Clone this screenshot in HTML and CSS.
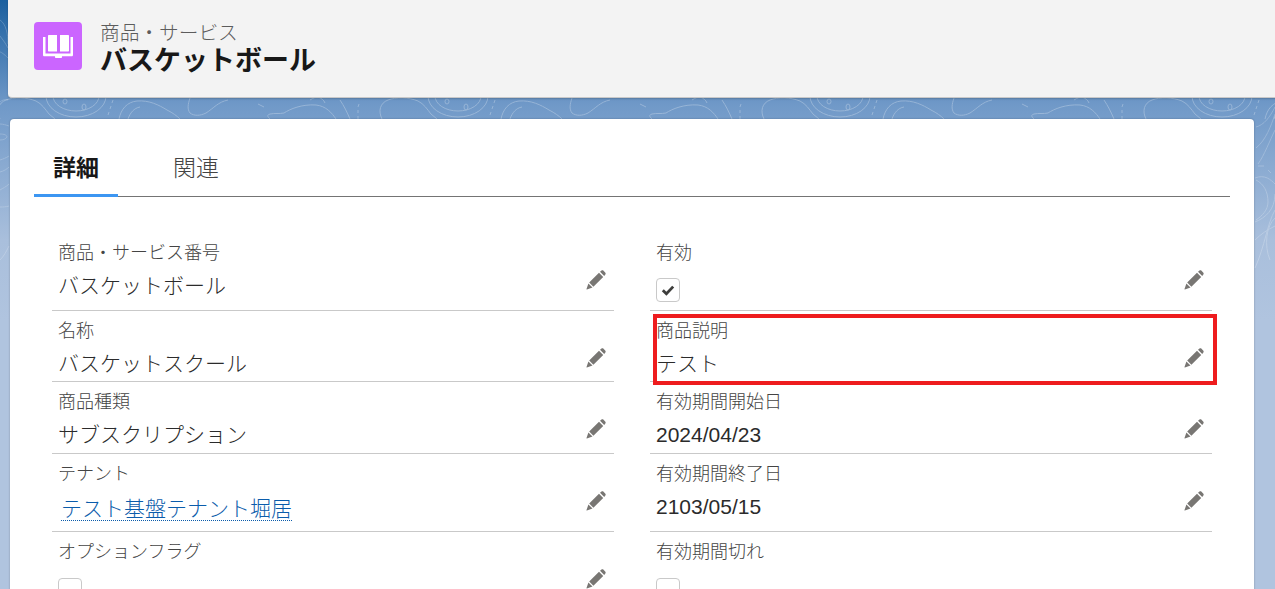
FILE: index.html
```html
<!DOCTYPE html>
<html lang="ja">
<head>
<meta charset="utf-8">
<title>バスケットボール</title>
<link rel="stylesheet" href="styles.css">
</head>
<body>
<svg class="texture" width="1275" height="589" viewBox="0 0 1275 589" fill="none" stroke="#fff" stroke-width="1">
  <defs>
    <g id="contour">
      <path d="M0 119c-4-8-2-16 6-19 8-3 20-3 30 1 6 3 9 8 13 13l6 5"/>
      <ellipse cx="76" cy="96" rx="30" ry="21"/>
      <ellipse cx="76" cy="96" rx="23" ry="15"/>
      <ellipse cx="65" cy="101.500" rx="2" ry="2.500"/>
      <ellipse cx="84" cy="107" rx="2" ry="3"/>
      <path d="M113 100l-1 3M111 106l-1 3M109 112l-1 3"/>
      <path d="M119 119c2-10 8-17 18-18 12-1 22 4 30 9 6 3 10 6 13 9"/>
      <path d="M128 119c2-6 6-11 12-12"/>
      <path d="M190 98c-2 6-3 11 0 15 4 3 10 3 16 0 8-5 12-11 22-13"/>
      <path d="M258 104l6 3"/>
      <path d="M270 119c-3-3-3-4 0-5 5-1 9 0 14-1 6-4 18-9 32-8 10 1 16 8 20 14"/>
      <path d="M310 100c3-2 6-3 8-3 3 1 6 3 7 6"/>
      <path d="M340 100c4 6 7 12 10 19"/>
      <path d="M359 104l-1 3M358 110v3M358 116v3"/>
    </g>
  </defs>
  <g class="strip">
    <use href="#contour"/>
    <use href="#contour" x="382"/>
    <use href="#contour" x="764"/>
    <use href="#contour" x="1146"/>
  </g>
  <g class="side-right">
    <path d="M1256 127c8-2 14-10 19-20M1256 148c10-8 15-22 19-34M1258 164c6-8 12-24 17-34"/>
    <path d="M1255 178c10-4 16 2 20 6M1255 222c10-4 20-12 20-28M1256 180c8 4 12 12 12 22 0 8-6 14-12 18"/>
    <path d="M1255 268c10-22 12-44 20-58M1270 260c-6-14-4-34 5-42M1258 166h6M1268 170l3 3"/>
    <path d="M1255 240c6-6 12-10 20-14"/>
  </g>
  <g class="side-left">
    <path d="M0 20c6 4 8 14 8 24M8 58c-4-4-7-6-8-6M0 36c3 4 6 8 8 12"/>
    <path d="M0 102c2-2 5-3 8-2"/>
    <path d="M0 124c3 0 6 1 9 2M0 140c3 0 6-1 7-3 0-2-3-3-7-3M0 160c3-1 6-2 9-4M0 172c4-1 7-3 9-5M0 190c3-2 6-3 9-6M0 207c3 0 6 0 9-1M0 260c4-4 6-8 9-14"/>
  </g>
</svg>
<header class="page-header">
  <div class="app-icon">
    <svg viewBox="0 0 48 48" width="48" height="48" fill="#fff">
      <path d="M15 13h8v16.500h-8c-.6 0-1-.4-1-1V14c0-.6.4-1 1-1z"/>
      <path d="M26 13h8c.6 0 1 .4 1 1v14.500c0 .6-.4 1-1 1h-8z"/>
      <path d="M9 15h2.500v16.500h25V15H39v18c0 .7-.6 1.300-1.300 1.300H28v.7c0 .6-.4 1-1 1h-5c-.6 0-1-.4-1-1v-.7H10.300c-.7 0-1.300-.6-1.300-1.300z"/>
    </svg>
  </div>
  <div class="titles">
    <div class="object-name">商品・サービス</div>
    <h1 class="record-name">バスケットボール</h1>
  </div>
</header>

<main class="card">
  <nav class="tabs">
    <a class="tab tab-active">詳細</a>
    <a class="tab">関連</a>
  </nav>
  <section class="fields">
    <div class="field row-first">
      <div class="label">商品・サービス番号</div>
      <div class="value">バスケットボール</div>
      <svg class="pencil" viewBox="0 0 20 20"><use href="#pen"/></svg>
    </div>
    <div class="field row-first">
      <div class="label">有効</div>
      <div class="box"><svg viewBox="0 0 14 14" width="14" height="14"><path d="M1.800 7.200 L5.400 10.800 L12.200 3.600" fill="none" stroke="#3e3e3c" stroke-width="2.800"/></svg></div>
      <svg class="pencil" viewBox="0 0 20 20"><use href="#pen"/></svg>
    </div>
    <div class="field row-b">
      <div class="label">名称</div>
      <div class="value">バスケットスクール</div>
      <svg class="pencil" viewBox="0 0 20 20"><use href="#pen"/></svg>
    </div>
    <div class="field row-b">
      <div class="label">商品説明</div>
      <div class="value">テスト</div>
      <svg class="pencil" viewBox="0 0 20 20"><use href="#pen"/></svg>
      <div class="highlight"></div>
    </div>
    <div class="field row-a">
      <div class="label">商品種類</div>
      <div class="value">サブスクリプション</div>
      <svg class="pencil" viewBox="0 0 20 20"><use href="#pen"/></svg>
    </div>
    <div class="field row-a">
      <div class="label">有効期間開始日</div>
      <div class="value">2024/04/23</div>
      <svg class="pencil" viewBox="0 0 20 20"><use href="#pen"/></svg>
    </div>
    <div class="field row-c">
      <div class="label">テナント</div>
      <div class="value value-link"><a class="link">テスト基盤テナント堀居</a></div>
      <svg class="pencil" viewBox="0 0 20 20"><use href="#pen"/></svg>
    </div>
    <div class="field row-c">
      <div class="label">有効期間終了日</div>
      <div class="value">2103/05/15</div>
      <svg class="pencil" viewBox="0 0 20 20"><use href="#pen"/></svg>
    </div>
    <div class="field row-d">
      <div class="label">オプションフラグ</div>
      <div class="box"></div>
      <svg class="pencil" viewBox="0 0 20 20"><use href="#pen"/></svg>
    </div>
    <div class="field row-d">
      <div class="label">有効期間切れ</div>
      <div class="box"></div>
    </div>
  </section>
</main>
<svg class="defs" width="0" height="0"><defs><g id="pen" fill="#787673"><path d="M14 1.800 15.500.6c.6-.4 1.300-.4 1.800 0l2.100 2.100c.4.500.4 1.200 0 1.800L18.200 6zM13 2.800 17.200 7 7.400 16.800 3.200 12.600zM2.400 13.500l4.100 4.100L.9 19.500c-.3.100-.5-.1-.4-.4z"/></g></defs></svg>
</body>
</html>
```
FILE: styles.css
```css
* { box-sizing: border-box; }
html, body { height: 589px; overflow: hidden; }
body {
  margin: 0;
  padding-left: 8px;
  font-family: "Liberation Sans", "Noto Sans CJK JP", sans-serif;
  color: #181818;
  background: linear-gradient(180deg, #1b5f9f 0, #7099c8 105px, #a9bfdc 240px, #b0c4df 320px, #b0c4df 100%);
  position: relative;
}
.texture { position: absolute; left: 0; top: 0; }
.strip { opacity: .27; }
.side-right { opacity: .22; }
.side-left { opacity: .2; }
.defs { position: absolute; }

.page-header {
  position: relative;
  height: 98px;
  margin-right: -8px;
  background: #f3f3f3;
  border-bottom: 1px solid #c9c9c9;
  border-bottom-left-radius: 4px;
  box-shadow: 0 1px 2px rgba(0, 0, 0, .2);
  display: flex;
  align-items: flex-start;
  padding: 22px 0 0 26px;
  gap: 18px;
}
.app-icon {
  width: 48px;
  height: 48px;
  border-radius: 4px;
  background: #cb65ff;
  flex: none;
}
.app-icon svg { display: block; }
.titles { display: flex; flex-direction: column; }
.object-name { font-size: 19.700px; line-height: 22px; font-weight: 300; color: #5c5c5c; }
.record-name { margin: 0; font-size: 27px; line-height: 34px; font-weight: 700; color: #181818; }

.card {
  position: relative;
  margin: 21px 0 0 2px;
  width: 1244px;
  height: 480px;
  background: #fff;
  border-radius: 4px;
  box-shadow: 0 0 2px rgba(0, 0, 0, .3);
  padding: 24px 24px 0;
}
.tabs {
  display: flex;
  height: 54px;
  border-bottom: 1px solid #747474;
}
.tab {
  width: 84px;
  height: 54px;
  margin-right: 36px;
  text-align: center;
  font-size: 23px;
  line-height: 50px;
  font-weight: 300;
  color: #444;
}
.tab-active {
  font-weight: 700;
  color: #181818;
  border-bottom: 3px solid #3c96f2;
}
.fields {
  display: grid;
  grid-template-columns: 562px 562px;
  column-gap: 36px;
  padding: 42px 0 0 18px;
}
.field {
  position: relative;
  border-bottom: 1px solid #c9c9c9;
  padding: 8px 0 0 6px;
}
.row-first { height: 72px; padding-top: 2px; }
.row-a { height: 72px; }
.row-b { height: 71px; }
.row-c { height: 78px; }
.row-d { height: 72px; border-bottom: 0; }
.label { font-size: 18px; line-height: 24px; font-weight: 300; color: #444; }
.value { font-size: 21px; line-height: 32px; margin-top: 5px; font-weight: 300; color: #2b2b2b; }
.value-link { margin-top: 7px; }
.link {
  color: #0b5cab;
  margin-left: 3px;
  border-bottom: 1px dotted #0b5cab;
}
.box {
  width: 24px;
  height: 24px;
  margin-top: 14px;
  border: 1px solid #c9c9c9;
  border-radius: 4px;
  background: #fff;
  display: flex;
  align-items: center;
  justify-content: center;
}
.row-first .box { margin-top: 13px; }
.pencil {
  position: absolute;
  right: 8px;
  top: 37px;
  width: 20px;
  height: 20px;
}
.row-first .pencil { top: 31px; }
.highlight {
  position: absolute;
  left: 3px;
  top: 3px;
  width: 564px;
  height: 71px;
  border: 4px solid #ee1c1e;
}
```
